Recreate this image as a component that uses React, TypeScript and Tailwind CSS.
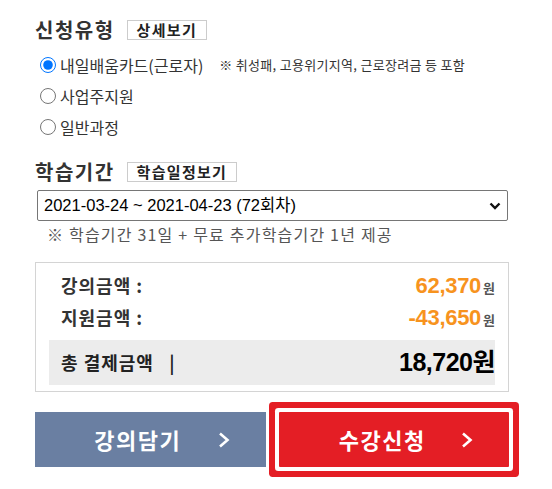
import { ReactNode } from 'react';

const kr = "font-['Noto_Sans_CJK_KR',sans-serif]";
const num = "font-['Liberation_Sans','Noto_Sans_CJK_KR',sans-serif]";

function Chevron() {
  return (
    <svg width="12" height="16" viewBox="0 0 12 16" fill="none">
      <polyline points="2,1.5 9.5,8 2,14.5" stroke="#fff" strokeWidth="2.6" />
    </svg>
  );
}

function SectionTitle({ title, button }: { title: string; button: string }) {
  return (
    <div className="flex items-center h-5">
      <h2 className={`${kr} text-[20px] tracking-[1.5px] font-bold text-[#333] leading-none`}>{title}</h2>
      <span
        className={`${kr} ml-[12px] h-5 px-[9px] border border-[#ccc] text-[15px] tracking-[1.3px] font-bold text-[#222] leading-[18px]`}
      >
        {button}
      </span>
    </div>
  );
}

function Radio({ checked, children }: { checked?: boolean; children: ReactNode }) {
  return (
    <label className="flex items-center h-[31px] pl-[5px]">
      <input
        type="radio"
        name="type"
        defaultChecked={checked}
        className="w-4 h-4 m-0 accent-[#0075ff]"
      />
      <span className="ml-[4px] flex items-center">{children}</span>
    </label>
  );
}

export default function App() {
  return (
    <div className={`w-[552px] h-[489px] bg-white pl-[35px] pt-5 ${kr} text-[#333]`}>
      <div className="w-[474px]">
        {/* 신청유형 */}
        <SectionTitle title="신청유형" button="상세보기" />
        <div className="mt-[9px]">
          <Radio checked>
            <span className="text-[16px] text-[#333]">내일배움카드(근로자)</span>
            <span className="ml-[16px] text-[13px] tracking-[0.3px] text-[#333]">※ 취성패, 고용위기지역, 근로장려금 등 포함</span>
          </Radio>
          <Radio>
            <span className="text-[16px] text-[#333]">사업주지원</span>
          </Radio>
          <Radio>
            <span className="text-[16px] text-[#333]">일반과정</span>
          </Radio>
        </div>

        {/* 학습기간 */}
        <div className="mt-5">
          <SectionTitle title="학습기간" button="학습일정보기" />
        </div>
        <div className="mt-2 ml-[2px] w-[471px] h-[31px] border border-[#767676] rounded-[2px] flex items-center justify-between pl-[6px] pr-[6px]">
          <span className={`${num} text-[16.5px] text-black`}>2021-03-24 ~ 2021-04-23 (72회차)</span>
          <svg width="12" height="8" viewBox="0 0 12 8" fill="none">
            <polyline points="1.5,1.5 6,6 10.5,1.5" stroke="#111" strokeWidth="2.4" />
          </svg>
        </div>
        <p className="mt-[3px] pl-[12px] h-5 leading-5 text-[16px] tracking-[1.2px] text-[#555]">
          ※ 학습기간 31일 + 무료 추가학습기간 1년 제공
        </p>

        {/* 금액 */}
        <div className="mt-[18px] border border-[#d4d4d4] px-[13px] pt-[6px] pb-[6px]">
          <div className="h-8 flex items-center justify-between pl-[12px]">
            <span className="text-[18px] tracking-[1px] font-bold text-[#333]">강의금액 :</span>
            <span className="flex items-baseline">
              <span className={`${num} text-[22px] font-bold text-[#f7931e] tracking-[-0.3px]`}>62,370</span>
              <span className="ml-[2px] text-[13px] font-bold text-[#555]">원</span>
            </span>
          </div>
          <div className="h-8 flex items-center justify-between pl-[12px]">
            <span className="text-[18px] tracking-[1px] font-bold text-[#333]">지원금액 :</span>
            <span className="flex items-baseline">
              <span className={`${num} text-[22px] font-bold text-[#f7931e] tracking-[-0.3px]`}>-43,650</span>
              <span className="ml-[2px] text-[13px] font-bold text-[#555]">원</span>
            </span>
          </div>
          <div className="mt-[7px] h-[45px] bg-[#ececec] flex items-center justify-between pl-[12px]">
            <span className="text-[18px] tracking-[1px] font-bold text-[#222] whitespace-pre">총 결제금액   |</span>
            <span className={`${num} text-[25px] font-bold text-black tracking-[-0.5px]`}>18,720원</span>
          </div>
        </div>

        {/* 버튼 */}
        <div className="mt-5 flex gap-[13px]">
          <button className="w-[231px] h-[55px] bg-[#6a7fa2] flex items-center justify-center pl-[24px] gap-[37px] text-white text-[22px] tracking-[1.5px] font-bold">
            강의담기
            <Chevron />
          </button>
          <button className="w-[231px] h-[55px] bg-[#e41e25] rounded-[1px] shadow-[0_0_0_4px_#fff,0_0_0_10px_#e41e25] flex items-center justify-center pl-[24px] gap-[35px] text-white text-[22px] tracking-[1.5px] font-bold">
            수강신청
            <Chevron />
          </button>
        </div>
      </div>
    </div>
  );
}
